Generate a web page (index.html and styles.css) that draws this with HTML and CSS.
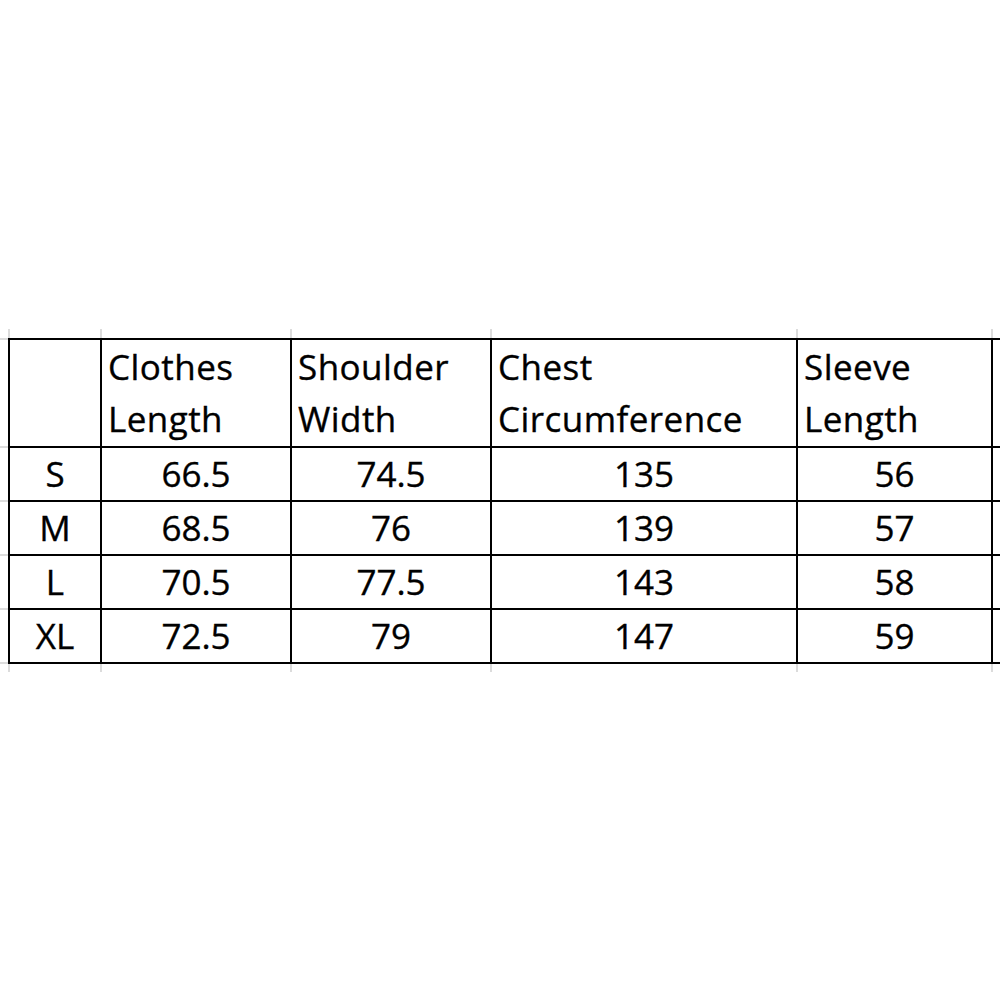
FILE: index.html
```html
<!DOCTYPE html>
<html lang="en">
<head>
<meta charset="utf-8">
<title>Size Chart</title>
<link rel="stylesheet" href="styles.css">
</head>
<body>
<div class="sheet">
  <!-- top gridline stubs -->
  <div class="corner"></div>
  <div class="stub-v first"></div>
  <div class="stub-v"></div>
  <div class="stub-v"></div>
  <div class="stub-v"></div>
  <div class="stub-v"></div>
  <div class="corner"></div>

  <!-- header -->
  <div class="stub-h top"></div>
  <div class="cell hdr size"></div>
  <div class="cell hdr"><span>Clothes</span><span>Length</span></div>
  <div class="cell hdr"><span>Shoulder</span><span>Width</span></div>
  <div class="cell hdr"><span>Chest</span><span>Circumference</span></div>
  <div class="cell hdr"><span>Sleeve</span><span>Length</span></div>
  <div class="tail hdr"></div>

  <div class="stub-h"></div>
  <div class="cell size">S</div>
  <div class="cell num">66.5</div>
  <div class="cell num">74.5</div>
  <div class="cell num">135</div>
  <div class="cell num">56</div>
  <div class="tail"></div>

  <div class="stub-h"></div>
  <div class="cell size">M</div>
  <div class="cell num">68.5</div>
  <div class="cell num">76</div>
  <div class="cell num">139</div>
  <div class="cell num">57</div>
  <div class="tail"></div>

  <div class="stub-h"></div>
  <div class="cell size">L</div>
  <div class="cell num">70.5</div>
  <div class="cell num">77.5</div>
  <div class="cell num">143</div>
  <div class="cell num">58</div>
  <div class="tail"></div>

  <div class="stub-h"></div>
  <div class="cell size">XL</div>
  <div class="cell num">72.5</div>
  <div class="cell num">79</div>
  <div class="cell num">147</div>
  <div class="cell num">59</div>
  <div class="tail"></div>

  <!-- bottom gridline stubs -->
  <div class="corner"></div>
  <div class="stub-v first"></div>
  <div class="stub-v"></div>
  <div class="stub-v"></div>
  <div class="stub-v"></div>
  <div class="stub-v"></div>
  <div class="corner"></div>
</div>
</body>
</html>
```

FILE: styles.css
```css
html, body {
  margin: 0;
  padding: 0;
  background: #ffffff;
  overflow: hidden;
}

body {
  font-family: "Open Sans", "Noto Sans", sans-serif;
  color: #000000;
}

.sheet {
  margin-top: 329px;
  display: grid;
  grid-template-columns: 8px 94px 190px 200px 306px 195px 7px;
  grid-template-rows: 9px 110px 54px 54px 54px 54px 8px;
}

.sheet > div {
  box-sizing: border-box;
}

.stub-v {
  border-right: 2px solid #dcdcdc;
}

.stub-v.first {
  border-left: 2px solid #dcdcdc;
}

.stub-h {
  border-bottom: 2px solid #dcdcdc;
}

.stub-h.top {
  border-top: 2px solid #dcdcdc;
}

.cell {
  border-right: 2px solid #000000;
  border-bottom: 2px solid #000000;
  font-size: 35px;
  line-height: 52px;
  white-space: nowrap;
  -webkit-text-stroke: 0.35px #000000;
}

.tail {
  border-bottom: 2px solid #000000;
}

.hdr {
  border-top: 2px solid #000000;
  display: flex;
  flex-direction: column;
  padding-left: 6px;
  padding-top: 1px;
  letter-spacing: 0.45px;
}

.size {
  border-left: 2px solid #000000;
  text-align: center;
}

.hdr.size {
  padding-left: 0;
}

.num {
  text-align: center;
}
```
